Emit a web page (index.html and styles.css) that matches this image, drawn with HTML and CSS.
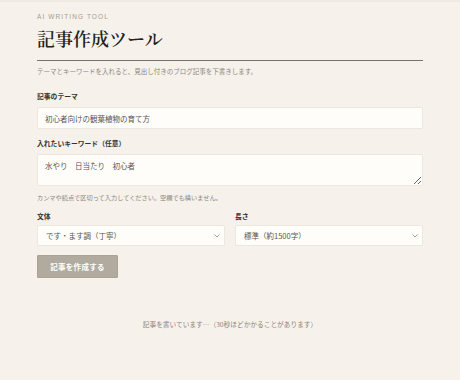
FILE: index.html
```html
<!DOCTYPE html>
<html lang="ja">
<head>
    <meta charset="UTF-8">
    <meta name="viewport" content="width=device-width, initial-scale=1.0">
    <title>記事作成ツール</title>
    <link rel="stylesheet" href="styles.css">
</head>
<body>
    <div class="page">
        <header class="header">
            <div class="eyebrow">AI WRITING TOOL</div>
            <h1 class="title">記事作成ツール</h1>
            <p class="lead">テーマとキーワードを入れると、見出し付きのブログ記事を下書きします。</p>
        </header>

        <form class="form">
            <div class="field">
                <label class="label" for="theme">記事のテーマ</label>
                <input class="input" id="theme" type="text" value="初心者向けの観葉植物の育て方">
            </div>

            <div class="field">
                <label class="label" for="keywords">入れたいキーワード（任意）</label>
                <textarea class="input textarea" id="keywords">水やり　日当たり　初心者</textarea>
                <div class="hint">カンマや読点で区切って入力してください。空欄でも構いません。</div>
            </div>

            <div class="row">
                <div class="field">
                    <label class="label" for="tone">文体</label>
                    <div class="select">
                        <span>です・ます調（丁寧）</span>
                        <svg width="6" height="4" viewBox="0 0 6 4"><path d="M0.5 0.5 L3 3 L5.5 0.5" fill="none" stroke="#999" stroke-width="0.9"/></svg>
                    </div>
                </div>
                <div class="field">
                    <label class="label" for="length">長さ</label>
                    <div class="select">
                        <span>標準（約1500字）</span>
                        <svg width="6" height="4" viewBox="0 0 6 4"><path d="M0.5 0.5 L3 3 L5.5 0.5" fill="none" stroke="#999" stroke-width="0.9"/></svg>
                    </div>
                </div>
            </div>

            <button type="button" class="btn" disabled>記事を作成する</button>
        </form>

        <div class="status">記事を書いています…（30秒ほどかかることがあります）</div>
    </div>
</body>
</html>
```

FILE: styles.css
```css
body {
    margin: 0;
    background-color: #f6f2eb;
    color: #333;
    font-family: "Noto Sans CJK JP", "Noto Sans", sans-serif;
    border-top: 2px solid #efeae2;
}

.page {
    width: 386px;
    margin: 0 auto;
    padding-top: 11px;
}

.eyebrow {
    font-family: "Liberation Sans", sans-serif;
    font-size: 6.5px;
    letter-spacing: 1.1px;
    color: #a39c91;
    line-height: 8px;
}

.title {
    margin: 6px 0 0;
    font-family: "Noto Serif CJK JP", "Liberation Serif", "Noto Sans CJK JP", serif;
    font-size: 18px;
    font-weight: 600;
    line-height: 22px;
    color: #222;
    padding-bottom: 11px;
    border-bottom: 1.5px solid #77726a;
}

.lead {
    margin: 6px 0 0;
    font-size: 6.5px;
    line-height: 9px;
    color: #8b857b;
}

.form {
    margin-top: 16px;
}

.field {
    margin-bottom: 10px;
}

.label {
    display: block;
    font-size: 6.8px;
    font-weight: 700;
    color: #333;
    line-height: 9px;
    margin-bottom: 6px;
}

.input {
    display: block;
    box-sizing: border-box;
    width: 100%;
    height: 22px;
    padding: 0 7px;
    border: 1px solid #ede7dd;
    border-radius: 2px;
    background-color: #fffdf9;
    font-family: inherit;
    font-size: 7.5px;
    color: #555;
    outline: none;
}

.textarea {
    height: 32px;
    padding: 5px 7px;
    resize: vertical;
    line-height: 12px;
}

.hint {
    margin-top: 7px;
    font-size: 6.2px;
    color: #8b857b;
    line-height: 9px;
}

.row {
    display: grid;
    grid-template-columns: 1fr 1fr;
    gap: 10px;
    margin-top: 10px;
    margin-bottom: -1px;
}

.row .label {
    margin-bottom: 4px;
}

.select {
    box-sizing: border-box;
    height: 21px;
    display: flex;
    align-items: center;
    justify-content: space-between;
    padding: 0 4px 0 8px;
    border: 1px solid #ede7dd;
    border-radius: 2px;
    background-color: #fffdf9;
    font-size: 7.5px;
    color: #555;
}

.btn {
    display: block;
    width: 81px;
    height: 23px;
    border: 1px solid #a9a295;
    border-radius: 1px;
    background-color: #b1ab9f;
    color: #fff;
    font-family: inherit;
    font-size: 7.5px;
    font-weight: 700;
    letter-spacing: 0.3px;
}

.status {
    margin-top: 41px;
    text-align: center;
    font-size: 6.7px;
    color: #8b857b;
}
```
